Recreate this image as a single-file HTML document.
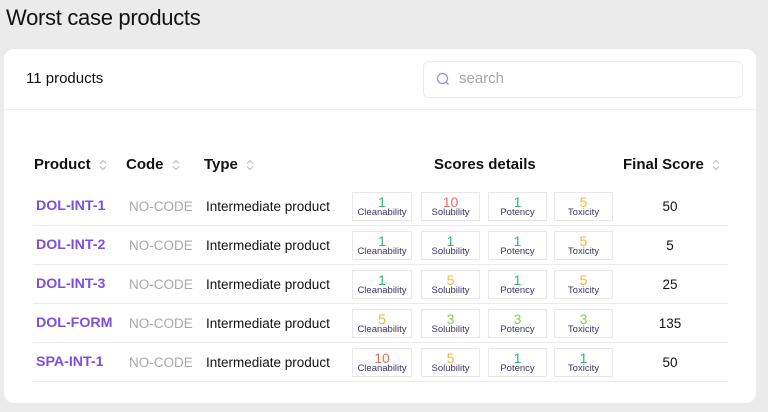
<!DOCTYPE html>
<html><head><meta charset="utf-8"><style>
*{margin:0;padding:0;box-sizing:border-box}
body{width:768px;height:412px;background:#ebebeb;font-family:"Liberation Sans",sans-serif;position:relative;overflow:hidden;color:#111}
.abs{position:absolute}
h1{position:absolute;left:6px;top:5px;font-size:22px;font-weight:400;letter-spacing:-0.3px;color:#111}
.card{position:absolute;left:4px;top:49px;width:752px;height:354px;background:#fff;border-radius:10px}
.hline{position:absolute;left:4px;width:752px;top:109px;height:1px;background:#efefef}
.search{position:absolute;left:423px;top:61px;width:320px;height:37px;border:1px solid #ececec;border-radius:6px}
.th{position:absolute;top:156px;font-size:15px;font-weight:700;color:#111}
.sort{display:inline-block;margin-left:8px;vertical-align:middle}
.row{position:absolute;left:33px;width:695px;height:39px;border-bottom:1px solid #ececec}
.prod{position:absolute;left:3px;top:11px;font-size:14.2px;font-weight:700;color:#7b4fe0}
.code{position:absolute;left:96px;top:12px;font-size:13.5px;color:#a8a8a8}
.type{position:absolute;left:173px;top:12px;font-size:13.5px;color:#111}
.box{position:absolute;top:5px;height:29px;border:1px solid #e8e8e8;text-align:center;font-size:14px;line-height:12px;padding-top:3px}
.box span{display:block;font-size:9.5px;color:#3a3560;line-height:10px}
.fs{position:absolute;left:612px;width:50px;text-align:center;top:12px;font-size:13.5px}
.g{color:#2fb86e}.r{color:#e8705a}.o{color:#f5b642}.l{color:#8fcf4a}
</style></head><body>
<h1>Worst case products</h1>
<div class="card"></div>
<div class="hline"></div>
<div class="abs" style="left:26px;top:70px;font-size:15px">11 products</div>
<div class="search"></div>
<svg class="abs" style="left:436px;top:72px" width="14" height="14" viewBox="0 0 14 14"><circle cx="6.5" cy="6.5" r="5" fill="none" stroke="#a58be8" stroke-width="1.3"/><path d="M10 10l2.5 2.5" stroke="#a58be8" stroke-width="1.3"/></svg>
<div class="abs" style="left:459px;top:70px;font-size:15px;color:#a8a8a8">search</div>

<div class="th" style="left:34px">Product<svg class="sort" width="8" height="12" viewBox="0 0 8 12"><path d="M1 4.5L4 1.5L7 4.5M1 7.5L4 10.5L7 7.5" fill="none" stroke="#bbb" stroke-width="1"/></svg></div>
<div class="th" style="left:126px">Code<svg class="sort" width="8" height="12" viewBox="0 0 8 12"><path d="M1 4.5L4 1.5L7 4.5M1 7.5L4 10.5L7 7.5" fill="none" stroke="#bbb" stroke-width="1"/></svg></div>
<div class="th" style="left:204px">Type<svg class="sort" width="8" height="12" viewBox="0 0 8 12"><path d="M1 4.5L4 1.5L7 4.5M1 7.5L4 10.5L7 7.5" fill="none" stroke="#bbb" stroke-width="1"/></svg></div>
<div class="th" style="left:434px">Scores details</div>
<div class="th" style="left:623px">Final Score<svg class="sort" width="8" height="12" viewBox="0 0 8 12"><path d="M1 4.5L4 1.5L7 4.5M1 7.5L4 10.5L7 7.5" fill="none" stroke="#bbb" stroke-width="1"/></svg></div>

<div class="row" style="top:187px"><div class="prod">DOL-INT-1</div><div class="code">NO-CODE</div><div class="type">Intermediate product</div>
<div class="box g" style="left:319px;width:60px">1<span>Cleanability</span></div><div class="box r" style="left:388px;width:59px">10<span>Solubility</span></div><div class="box g" style="left:455px;width:59px">1<span>Potency</span></div><div class="box o" style="left:521px;width:59px">5<span>Toxicity</span></div><div class="fs">50</div></div>

<div class="row" style="top:226px"><div class="prod">DOL-INT-2</div><div class="code">NO-CODE</div><div class="type">Intermediate product</div>
<div class="box g" style="left:319px;width:60px">1<span>Cleanability</span></div><div class="box g" style="left:388px;width:59px">1<span>Solubility</span></div><div class="box g" style="left:455px;width:59px">1<span>Potency</span></div><div class="box o" style="left:521px;width:59px">5<span>Toxicity</span></div><div class="fs">5</div></div>

<div class="row" style="top:265px"><div class="prod">DOL-INT-3</div><div class="code">NO-CODE</div><div class="type">Intermediate product</div>
<div class="box g" style="left:319px;width:60px">1<span>Cleanability</span></div><div class="box o" style="left:388px;width:59px">5<span>Solubility</span></div><div class="box g" style="left:455px;width:59px">1<span>Potency</span></div><div class="box o" style="left:521px;width:59px">5<span>Toxicity</span></div><div class="fs">25</div></div>

<div class="row" style="top:304px"><div class="prod">DOL-FORM</div><div class="code">NO-CODE</div><div class="type">Intermediate product</div>
<div class="box o" style="left:319px;width:60px">5<span>Cleanability</span></div><div class="box l" style="left:388px;width:59px">3<span>Solubility</span></div><div class="box l" style="left:455px;width:59px">3<span>Potency</span></div><div class="box l" style="left:521px;width:59px">3<span>Toxicity</span></div><div class="fs">135</div></div>

<div class="row" style="top:343px"><div class="prod">SPA-INT-1</div><div class="code">NO-CODE</div><div class="type">Intermediate product</div>
<div class="box r" style="left:319px;width:60px">10<span>Cleanability</span></div><div class="box o" style="left:388px;width:59px">5<span>Solubility</span></div><div class="box g" style="left:455px;width:59px">1<span>Potency</span></div><div class="box g" style="left:521px;width:59px">1<span>Toxicity</span></div><div class="fs">50</div></div>
</body></html>
